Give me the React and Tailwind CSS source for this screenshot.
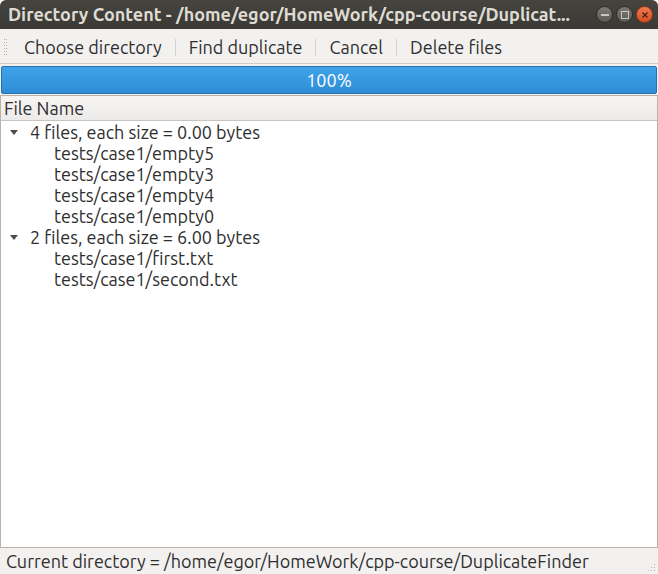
import React from "react";

const groups = [
  {
    label: "4 files, each size = 0.00 bytes",
    files: ["tests/case1/empty5", "tests/case1/empty3", "tests/case1/empty4", "tests/case1/empty0"],
  },
  {
    label: "2 files, each size = 6.00 bytes",
    files: ["tests/case1/first.txt", "tests/case1/second.txt"],
  },
];

const font = { fontFamily: "Ubuntu, 'Noto Sans', 'Open Sans', sans-serif" };

function WinButton({ kind }) {
  if (kind === "close") {
    return (
      <div className="flex h-[17px] w-[17px] items-center justify-center rounded-full border border-[#8a3a1c] bg-gradient-to-b from-[#f37a4f] to-[#d94d1c]">
        <svg width="8" height="8" viewBox="0 0 8 8">
          <path d="M1.5 1.5 L6.5 6.5 M6.5 1.5 L1.5 6.5" stroke="#3c2a22" strokeWidth="1.4" />
        </svg>
      </div>
    );
  }
  return (
    <div className="flex h-[17px] w-[17px] items-center justify-center rounded-full border border-[#2e2d2a] bg-gradient-to-b from-[#7a7974] to-[#5a5954]">
      {kind === "min" ? (
        <div className="h-[2px] w-[8px] bg-[#c9c6bf]" />
      ) : (
        <div className="h-[8px] w-[8px] border border-[#c9c6bf]" />
      )}
    </div>
  );
}

function Sep() {
  return <div className="mx-[7px] h-[17px] w-px bg-[#d6d2cc]" />;
}

export default function App() {
  return (
    <div className="flex h-[574px] w-[658px] flex-col overflow-hidden rounded-t-[6px] bg-[#f2f1f0] text-[18px] leading-[21px] text-[#3c3c3c]" style={font}>
      {/* title bar */}
      <div className="flex h-[29px] items-center bg-gradient-to-b from-[#45443f] to-[#3a3935] pl-[8px] pr-[5px]">
        <div className="min-w-0 flex-1 whitespace-nowrap text-[18px] font-bold text-[#dfdbd2]">
          Directory Content - /home/egor/HomeWork/cpp-course/Duplicat...
        </div>
        <div className="flex items-center gap-[3px]">
          <WinButton kind="min" />
          <WinButton kind="max" />
          <WinButton kind="close" />
        </div>
      </div>

      {/* toolbar */}
      <div className="flex h-[35px] items-center border-b border-[#d0ccc6] pl-[4px] pt-[2px] text-[#2e2e2e]">
        <div className="mr-[17px] grid grid-cols-2 gap-x-[1px] gap-y-[2px]">
          {Array.from({ length: 12 }).map((_, i) => (
            <div key={i} className="h-px w-px bg-[#b8b4ad]" />
          ))}
        </div>
        <span className="pr-[6px]">Choose directory</span>
        <Sep />
        <span className="px-[6px]">Find duplicate</span>
        <Sep />
        <span className="px-[6px]">Cancel</span>
        <Sep />
        <span className="px-[6px]">Delete files</span>
      </div>

      {/* progress */}
      <div className="px-[1px] pt-[2px]">
        <div className="flex h-[28px] items-center justify-center rounded-[2px] border border-[#2a6fb0] bg-gradient-to-b from-[#3ea3ea] to-[#2f8dd6] text-white">
          100%
        </div>
      </div>

      {/* tree */}
      <div className="mt-[1px] flex flex-1 flex-col border border-[#b8b4ad] bg-white">
        <div className="flex h-[25px] items-center border-b border-[#c9c5be] bg-gradient-to-b from-[#f6f5f4] to-[#edebe9] pl-[3px] text-[#2e2e2e]">
          File Name
        </div>
        <div className="flex flex-col pt-[1px] text-[#2e2e2e]">
          {groups.map((g) => (
            <div key={g.label} className="flex flex-col">
              <div className="flex h-[21px] items-center">
                <svg className="ml-[9px] mr-[12px]" width="8" height="5" viewBox="0 0 8 5">
                  <path d="M0 0 H8 L4 5 Z" fill="#4c4c4c" />
                </svg>
                <span>{g.label}</span>
              </div>
              {g.files.map((f) => (
                <div key={f} className="flex h-[21px] items-center pl-[53px]">
                  {f}
                </div>
              ))}
            </div>
          ))}
        </div>
      </div>

      {/* status bar */}
      <div className="relative flex h-[26px] items-center pl-[6px] text-[#2e2e2e]">
        Current directory = /home/egor/HomeWork/cpp-course/DuplicateFinder
        <div className="absolute bottom-[3px] right-[3px] grid grid-cols-3 gap-[2px]">
          {[0, 0, 1, 0, 1, 1, 1, 1, 1].map((v, i) => (
            <div key={i} className={v ? "h-px w-px bg-[#b8b4ad]" : "h-px w-px"} />
          ))}
        </div>
      </div>
    </div>
  );
}
